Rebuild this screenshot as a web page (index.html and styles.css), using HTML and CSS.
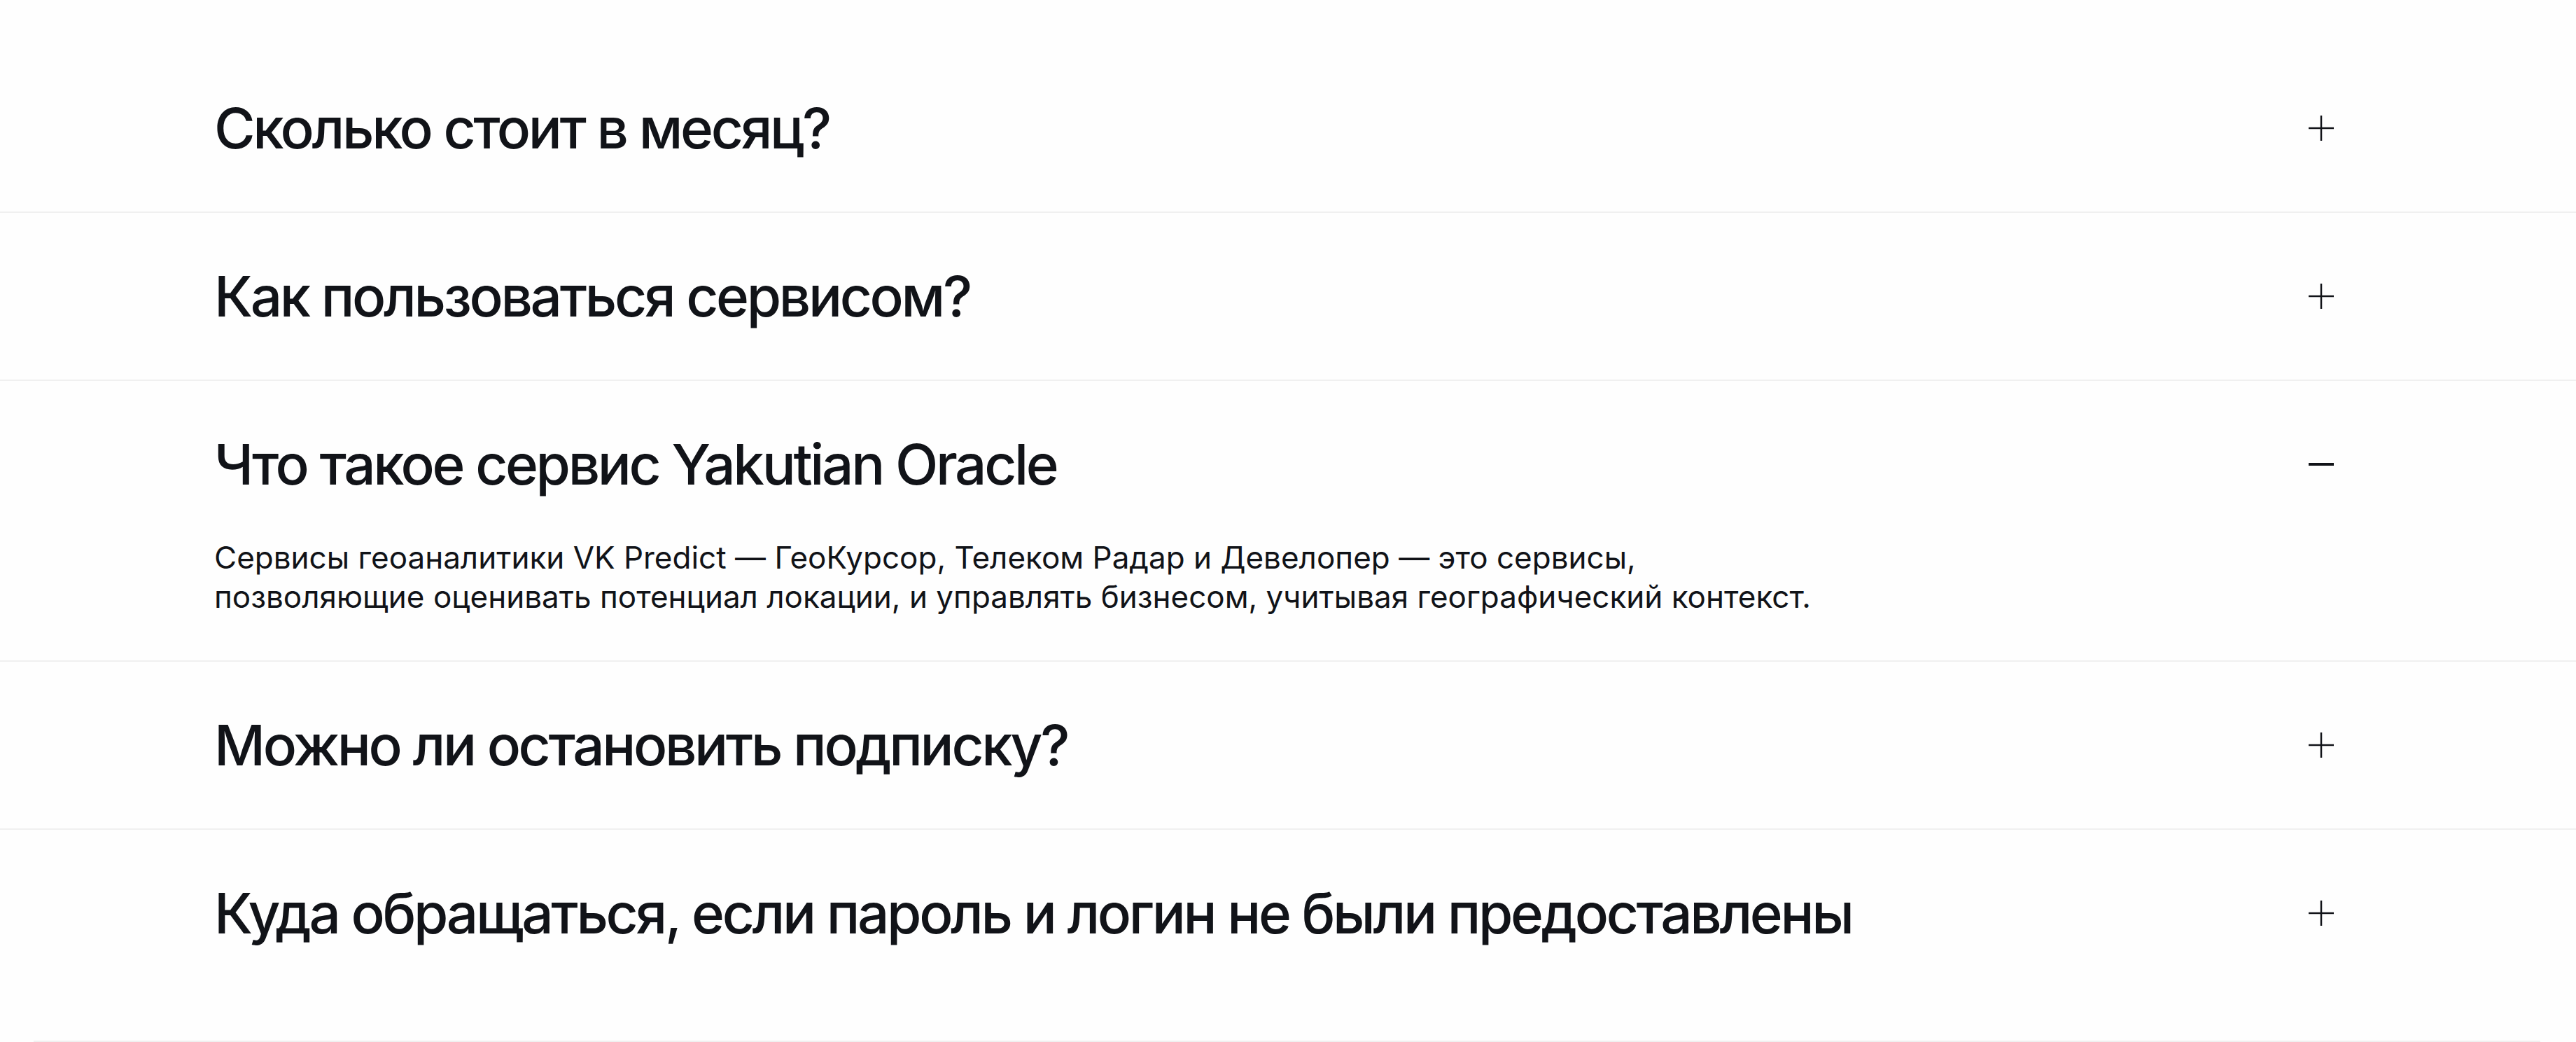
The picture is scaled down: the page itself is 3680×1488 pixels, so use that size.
FILE: index.html
```html
<!DOCTYPE html>
<html lang="ru">
<head>
<meta charset="utf-8">
<title>FAQ</title>
<link rel="stylesheet" href="styles.css">
</head>
<body>
<section class="faq">
  <div class="faq-item">
    <div class="faq-head">
      <h3 class="faq-title">Сколько стоит в месяц?</h3>
      <svg class="faq-icon" viewBox="0 0 36 36"><path d="M0 18H36M18 0V36" stroke="#111318" stroke-width="2.5" fill="none"/></svg>
    </div>
  </div>
  <div class="faq-item">
    <div class="faq-head">
      <h3 class="faq-title">Как пользоваться сервисом?</h3>
      <svg class="faq-icon" viewBox="0 0 36 36"><path d="M0 18H36M18 0V36" stroke="#111318" stroke-width="2.5" fill="none"/></svg>
    </div>
  </div>
  <div class="faq-item open">
    <div class="faq-head">
      <h3 class="faq-title">Что такое сервис Yakutian Oracle</h3>
      <svg class="faq-icon" viewBox="0 0 36 36"><path d="M0 18H36" stroke="#111318" stroke-width="4" fill="none"/></svg>
    </div>
    <p class="faq-body">Сервисы геоаналитики VK Predict — ГеоКурсор, Телеком Радар и Девелопер — это сервисы,<br>позволяющие оценивать потенциал локации, и управлять бизнесом, учитывая географический контекст.</p>
  </div>
  <div class="faq-item">
    <div class="faq-head">
      <h3 class="faq-title">Можно ли остановить подписку?</h3>
      <svg class="faq-icon" viewBox="0 0 36 36"><path d="M0 18H36M18 0V36" stroke="#111318" stroke-width="2.5" fill="none"/></svg>
    </div>
  </div>
  <div class="faq-item">
    <div class="faq-head">
      <h3 class="faq-title">Куда обращаться, если пароль и логин не были предоставлены</h3>
      <svg class="faq-icon" viewBox="0 0 36 36"><path d="M0 18H36M18 0V36" stroke="#111318" stroke-width="2.5" fill="none"/></svg>
    </div>
  </div>
</section>
<div class="faq-footer-line"></div>
</body>
</html>
```
FILE: styles.css
```css
html, body {
  margin: 0;
  padding: 0;
  background: #fefefe;
}
body {
  font-family: Inter, "Noto Sans", sans-serif;
  color: #111318;
}
.faq {
  padding-top: 64px;
  padding-bottom: 63px;
}
.faq-item {
  padding: 71px 346px 71px 306px;
  border-bottom: 2px solid #f0f0f0;
}
.faq-item:last-child {
  border-bottom: none;
}
.faq-item.open {
  padding-bottom: 63px;
}
.faq-head {
  display: flex;
  align-items: center;
  justify-content: space-between;
}
.faq-title {
  margin: 0;
  font-size: 80px;
  font-weight: 500;
  line-height: 96px;
  letter-spacing: -0.042em;
}
.faq-icon {
  width: 36px;
  height: 36px;
  flex: none;
}
.faq-body {
  margin: 57px 0 0;
  font-size: 44px;
  line-height: 56px;
  letter-spacing: 0;
}
.faq-footer-line {
  height: 2px;
  margin: 0 51px 0 48px;
  background: #f0f0f0;
}
```
